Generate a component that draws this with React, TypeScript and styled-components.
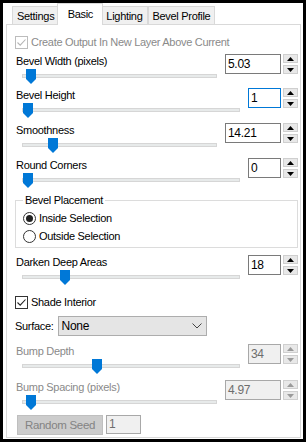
import React from 'react';
import styled, { createGlobalStyle } from 'styled-components';

const GlobalStyle = createGlobalStyle`
  html, body {
    margin: 0;
    padding: 0;
    background: #fff;
  }
  body {
    font-family: "Liberation Sans", Arial, sans-serif;
    font-size: 11px;
    letter-spacing: -0.3px;
    color: #000;
  }
`;

const DISABLED_TEXT = '#8a8a8a';

interface SliderFieldProps {
  label: string;
  value: string;
  pos: number;
  mt: number;
  wide?: boolean;
  focused?: boolean;
  disabled?: boolean;
}

const SliderField: React.FC<SliderFieldProps> = ({ label, value, pos, mt, wide, focused, disabled }) => (
  <SliderRow $mt={mt}>
    <LeftCol>
      <Label $disabled={disabled}>{label}</Label>
      <Slider>
        <Track />
        <Thumb viewBox="0 0 10 15" style={{ left: `calc(1px + ${pos} * (100% - 12px))` }}>
          <polygon points="0,0 10,0 10,10 5,15 0,10" />
        </Thumb>
      </Slider>
    </LeftCol>
    <Spin>
      <SpinField $w={wide ? 56 : 33} $focused={focused} $disabled={disabled}>
        {value}
      </SpinField>
      <SpinButtons>
        <SpinButton>
          <svg width="7" height="4" viewBox="0 0 7 4">
            <polygon points="0,4 3.5,0 7,4" fill={disabled ? '#9a9a9a' : '#000'} />
          </svg>
        </SpinButton>
        <SpinButton>
          <svg width="7" height="4" viewBox="0 0 7 4">
            <polygon points="0,0 7,0 3.5,4" fill={disabled ? '#9a9a9a' : '#000'} />
          </svg>
        </SpinButton>
      </SpinButtons>
    </Spin>
  </SliderRow>
);

const CheckMark = ({ color }: { color: string }) => (
  <svg width="11" height="11" viewBox="0 0 11 11">
    <path d="M1.5 5.5 L4.2 8.2 L9.5 2.5" fill="none" stroke={color} strokeWidth="1.1" />
  </svg>
);

const App: React.FC = () => {
  return (
    <>
      <GlobalStyle />
      <Window>
        <TabStrip>
          <Tab>Settings</Tab>
          <Tab $active>Basic</Tab>
          <Tab>Lighting</Tab>
          <Tab>Bevel Profile</Tab>
        </TabStrip>
        <Panel>
          <CheckRow $disabled>
            <Box $disabled>
              <CheckMark color="#b5b5b5" />
            </Box>
            Create Output In New Layer Above Current
          </CheckRow>

          <SliderField label="Bevel Width (pixels)" value="5.03" pos={0.016} mt={5} wide />
          <SliderField label="Bevel Height" value="1" pos={0} mt={3} focused />
          <SliderField label="Smoothness" value="14.21" pos={0.137} mt={4} wide />
          <SliderField label="Round Corners" value="0" pos={0} mt={4} />

          <Group>
            <Legend>Bevel Placement</Legend>
            <RadioRow>
              <RadioCircle $checked />
              Inside Selection
            </RadioRow>
            <RadioRow>
              <RadioCircle />
              Outside Selection
            </RadioRow>
          </Group>

          <SliderField label="Darken Deep Areas" value="18" pos={0.18} mt={7} />

          <CheckRow $mt={9}>
            <Box>
              <CheckMark color="#222" />
            </Box>
            Shade Interior
          </CheckRow>

          <SurfaceRow>
            <span>Surface:</span>
            <Select>
              <span>None</span>
              <svg width="10" height="6" viewBox="0 0 10 6">
                <path d="M0.5 0.5 L5 5 L9.5 0.5" fill="none" stroke="#444" strokeWidth="1" />
              </svg>
            </Select>
          </SurfaceRow>

          <SliderField label="Bump Depth" value="34" pos={0.335} mt={8} disabled />
          <SliderField label="Bump Spacing (pixels)" value="4.97" pos={0.016} mt={5} wide disabled />

          <ButtonRow>
            <SeedButton disabled>Random Seed</SeedButton>
            <SeedField>1</SeedField>
          </ButtonRow>
        </Panel>
      </Window>
    </>
  );
};

const Window = styled.div`
  width: 306px;
  height: 442px;
  box-sizing: border-box;
  border: 3px solid #000;
  background: #fff;
  display: flex;
  flex-direction: column;
`;

const TabStrip = styled.div`
  display: flex;
  align-items: flex-end;
  height: 21px;
  padding-left: 9px;
  position: relative;
  z-index: 1;
`;

const Tab = styled.div<{ $active?: boolean }>`
  box-sizing: border-box;
  min-width: ${(p) => (p.$active ? 46 : 42)}px;
  padding: 0 ${(p) => (p.$active ? 6 : 4)}px;
  height: ${(p) => (p.$active ? 22 : 18)}px;
  margin: 0 ${(p) => (p.$active ? -2 : 0)}px ${(p) => (p.$active ? -1 : 0)}px;
  padding-bottom: ${(p) => (p.$active ? 2 : 0)}px;
  display: flex;
  align-items: center;
  justify-content: center;
  border: 1px solid #d9d9d9;
  border-bottom: none;
  background: ${(p) => (p.$active ? '#fff' : '#f0f0f0')};
  position: relative;
  z-index: ${(p) => (p.$active ? 2 : 1)};
  & + & {
    border-left: ${(p) => (p.$active ? '1px solid #d9d9d9' : 'none')};
  }
`;

const Panel = styled.div`
  flex: 1;
  margin: 0 2px 1px 3px;
  border: 1px solid #d9d9d9;
  padding: 10px 2px 0 8px;
  display: flex;
  flex-direction: column;
`;

const CheckRow = styled.div<{ $disabled?: boolean; $mt?: number }>`
  display: flex;
  align-items: center;
  gap: 3px;
  height: 14px;
  margin-top: ${(p) => p.$mt ?? 0}px;
  color: ${(p) => (p.$disabled ? DISABLED_TEXT : '#000')};
`;

const Box = styled.span<{ $disabled?: boolean }>`
  width: 13px;
  height: 13px;
  box-sizing: border-box;
  border: 1px solid ${(p) => (p.$disabled ? '#bcbcbc' : '#333')};
  background: #fff;
  display: flex;
  align-items: center;
  justify-content: center;
`;

const SliderRow = styled.div<{ $mt: number }>`
  display: flex;
  align-items: flex-start;
  margin-top: ${(p) => p.$mt}px;
`;

const LeftCol = styled.div`
  flex: 1;
  min-width: 0;
  display: flex;
  flex-direction: column;
`;

const Label = styled.div<{ $disabled?: boolean }>`
  height: 14px;
  line-height: 14px;
  padding-left: 1px;
  white-space: nowrap;
  color: ${(p) => (p.$disabled ? DISABLED_TEXT : '#000')};
`;

const Slider = styled.div`
  position: relative;
  height: 17px;
  box-sizing: border-box;
  padding-top: 6px;
  margin: 0 8px 0 7px;
`;

const Track = styled.div`
  height: 4px;
  box-sizing: border-box;
  border: 1px solid #d6d6d6;
  background: #e7eaea;
`;

const Thumb = styled.svg`
  position: absolute;
  top: 1px;
  width: 10px;
  height: 15px;
  fill: #0078d7;
`;

const Spin = styled.div`
  display: flex;
  gap: 2px;
  height: 20px;
`;

const SpinField = styled.div<{ $w: number; $focused?: boolean; $disabled?: boolean }>`
  width: ${(p) => p.$w}px;
  box-sizing: border-box;
  border: 1px solid ${(p) => (p.$focused ? '#0078d7' : p.$disabled ? '#a8a8a8' : '#7a7a7a')};
  background: ${(p) => (p.$disabled ? '#f0f0f0' : '#fff')};
  color: ${(p) => (p.$disabled ? '#6d6d6d' : '#000')};
  padding: 0 2px;
  font-size: 12px;
  line-height: 18px;
`;

const SpinButtons = styled.div`
  width: 15px;
  display: flex;
  flex-direction: column;
  gap: 2px;
`;

const SpinButton = styled.div`
  flex: 1;
  box-sizing: border-box;
  border: 1px solid #cfcfcf;
  background: #e8e8e8;
  display: flex;
  align-items: center;
  justify-content: center;
`;

const Group = styled.fieldset`
  margin: 4px 0 0;
  padding: 0 7px 4px;
  border: 1px solid #dcdcdc;
  min-width: 0;
`;

const Legend = styled.legend`
  padding: 0 2px;
  line-height: 14px;
`;

const RadioRow = styled.div`
  display: flex;
  align-items: center;
  gap: 3px;
  height: 14px;
  margin-top: 4px;
`;

const RadioCircle = styled.span<{ $checked?: boolean }>`
  width: 13px;
  height: 13px;
  box-sizing: border-box;
  border: 1px solid #333;
  border-radius: 50%;
  background: #fff;
  display: flex;
  align-items: center;
  justify-content: center;
  &::after {
    content: '';
    width: 7px;
    height: 7px;
    border-radius: 50%;
    background: ${(p) => (p.$checked ? '#222' : 'transparent')};
  }
`;

const SurfaceRow = styled.div`
  display: flex;
  align-items: center;
  gap: 4px;
  height: 20px;
  margin-top: 7px;
`;

const Select = styled.div`
  width: 149px;
  height: 20px;
  box-sizing: border-box;
  border: 1px solid #adadad;
  background: #e5e5e5;
  padding: 0 4px 0 3px;
  display: flex;
  align-items: center;
  justify-content: space-between;
  font-size: 12px;
`;

const ButtonRow = styled.div`
  display: flex;
  gap: 3px;
  margin-top: 4px;
  padding-left: 2px;
`;

const SeedButton = styled.button`
  width: 86px;
  height: 20px;
  box-sizing: border-box;
  border: 1px solid #bfbfbf;
  background: #cccccc;
  color: #838383;
  font: inherit;
  letter-spacing: inherit;
  font-size: 11.5px;
  padding: 0;
`;

const SeedField = styled.div`
  width: 35px;
  height: 19px;
  box-sizing: border-box;
  border: 1px solid #a8a8a8;
  background: #f0f0f0;
  color: #6d6d6d;
  padding: 0 2px;
  font-size: 12px;
  line-height: 17px;
`;

export default App;
